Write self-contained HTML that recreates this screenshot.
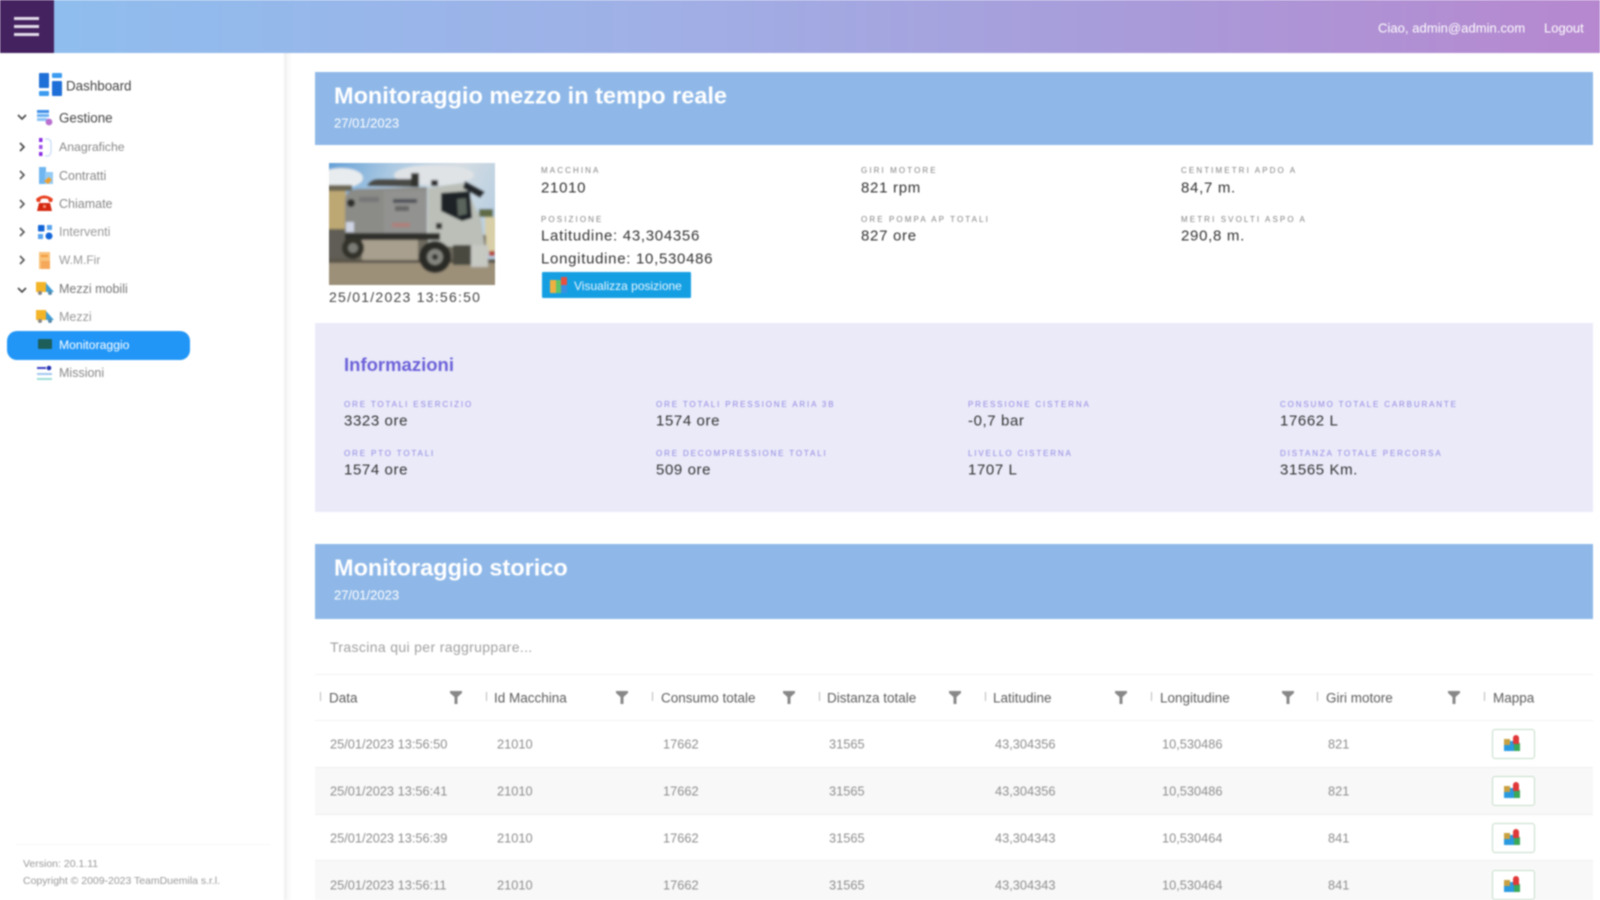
<!DOCTYPE html>
<html lang="it"><head><meta charset="utf-8"><title>Monitoraggio</title>
<style>
html,body{margin:0;padding:0;width:1600px;height:900px;overflow:hidden;background:#fff}
#r{position:absolute;left:0;top:0;width:1600px;height:900px;overflow:hidden;background:#fff;font-family:"Liberation Sans",sans-serif;filter:blur(.8px)}
#r *{box-sizing:border-box}
.t{position:absolute;white-space:nowrap;line-height:1;transform:translateY(-50%)}
.b{position:absolute}
svg{position:absolute;overflow:visible}
.nav{font-size:12.5px;color:#777}
.lab{font-size:8px;letter-spacing:2.1px;color:#808080}
.val{font-size:15px;color:#333;letter-spacing:.7px}
.ilab{font-size:8px;letter-spacing:1.85px;color:#8f87e0}
.ival{font-size:15px;color:#333;letter-spacing:.6px}
.th{font-size:13.5px;color:#5c5c5c}
.td{font-size:12.8px;color:#8e8e8e}
.ttl{font-size:23.5px;font-weight:bold;color:#fff}
.dt{font-size:13px;color:#fff}
</style></head><body>
<div id="r">
<!-- top bar -->
<div class="b" style="left:0;top:0;width:1600px;height:53px;background:linear-gradient(90deg,#8dbeee 0%,#9fb0e6 40%,#a99ad9 72%,#b687cf 100%)"></div>
<div class="b" style="left:0;top:0;width:54px;height:53px;background:#44215f"></div>
<div class="b" style="left:14px;top:17px;width:25px;height:3px;background:#e4dce9"></div>
<div class="b" style="left:14px;top:25px;width:25px;height:3px;background:#e4dce9"></div>
<div class="b" style="left:14px;top:33px;width:25px;height:3px;background:#e4dce9"></div>
<span class="t" style="left:1378px;top:28px;font-size:13px;color:#fff;letter-spacing:.05px">Ciao, admin@admin.com</span>
<span class="t" style="left:1544px;top:28px;font-size:13px;color:#fff">Logout</span>

<!-- sidebar -->
<div class="b" style="left:284px;top:53px;width:8px;height:847px;background:linear-gradient(90deg,#efefef,#fafafa 60%,#fff)"></div>
<svg style="left:38px;top:72px" width="26" height="26" viewBox="0 0 26 26"><rect x="1" y="1" width="10" height="15" rx="1" fill="#1e6fd8"/><rect x="1" y="19" width="10" height="5" rx="1" fill="#3b9bf0"/><rect x="14" y="1" width="10" height="5" rx="1" fill="#3b9bf0"/><rect x="14" y="9" width="10" height="15" rx="1" fill="#1e6fd8"/></svg>
<span class="t nav" style="left:66px;top:86px;color:#444;font-size:13.4px">Dashboard</span>
<svg style="left:17px;top:114px" width="10" height="6"><path d="M1 1l4 4 4-4" fill="none" stroke="#444" stroke-width="1.6"/></svg>
<svg style="left:37px;top:109px" width="16" height="17"><rect x="0" y="1" width="12" height="3" fill="#3f8fe8"/><rect x="0" y="5" width="12" height="3" fill="#6fb2f2"/><rect x="0" y="9" width="10" height="3" fill="#8cc3f5"/><circle cx="12" cy="13" r="3.4" fill="#b86fd0"/></svg>
<span class="t nav" style="left:59px;top:118px;color:#444;font-size:13.4px">Gestione</span>
<svg style="left:19px;top:142px" width="6" height="10"><path d="M1 1l4 4-4 4" fill="none" stroke="#444" stroke-width="1.6"/></svg>
<svg style="left:38px;top:138px" width="16" height="19"><rect x="1" y="0" width="3.5" height="4" fill="#8a2be2"/><rect x="1" y="7" width="3.5" height="4" fill="#a050e8"/><rect x="1" y="14" width="3.5" height="4" fill="#8a2be2"/><path d="M7 1h3q3 1 3 4v8q0 4-3 5H7" fill="none" stroke="#cfe0f8" stroke-width="1.5"/></svg>
<span class="t nav" style="left:59px;top:147px;color:#888;font-size:12.3px">Anagrafiche</span>
<svg style="left:19px;top:170px" width="6" height="10"><path d="M1 1l4 4-4 4" fill="none" stroke="#555" stroke-width="1.6"/></svg>
<svg style="left:38px;top:167px" width="16" height="18"><rect x="1" y="0" width="7" height="17" fill="#6fb6f0"/><rect x="7" y="5" width="8" height="12" fill="#93cbf5"/><path d="M6 14l5-4 3 3-4 4z" fill="#f0a030"/></svg>
<span class="t nav" style="left:59px;top:176px;color:#888">Contratti</span>
<svg style="left:19px;top:199px" width="6" height="10"><path d="M1 1l4 4-4 4" fill="none" stroke="#555" stroke-width="1.6"/></svg>
<svg style="left:35px;top:194px" width="19" height="18"><path d="M1 5q8-7 17 0l-1 3h-3l-1-3q-4-1-7 0l-1 3H2z" fill="#e84020"/><path d="M4 9h11l2 8H2z" fill="#d42810"/><circle cx="9.5" cy="12.5" r="1.6" fill="#f58a70"/></svg>
<span class="t nav" style="left:59px;top:204px;color:#888">Chiamate</span>
<svg style="left:19px;top:227px" width="6" height="10"><path d="M1 1l4 4-4 4" fill="none" stroke="#555" stroke-width="1.6"/></svg>
<svg style="left:37px;top:224px" width="16" height="16"><rect x="1" y="1" width="6.5" height="6.5" rx="1" fill="#1466d8"/><rect x="10" y="1" width="5" height="5" fill="#5aa5ee"/><rect x="1" y="10" width="5" height="5" fill="#5aa5ee"/><circle cx="12" cy="12" r="3.5" fill="#1466d8"/></svg>
<span class="t nav" style="left:59px;top:232px;color:#999">Interventi</span>
<svg style="left:19px;top:255px" width="6" height="10"><path d="M1 1l4 4-4 4" fill="none" stroke="#555" stroke-width="1.6"/></svg>
<svg style="left:38px;top:252px" width="14" height="17"><rect x="1" y="0" width="11" height="17" fill="#f9c27a"/><rect x="3" y="3" width="7" height="2" fill="#f39a3c"/><rect x="3" y="9" width="9" height="8" fill="#f6a85a"/></svg>
<span class="t nav" style="left:59px;top:260px;color:#999;font-size:12px">W.M.Fir</span>
<svg style="left:17px;top:287px" width="10" height="6"><path d="M1 1l4 4 4-4" fill="none" stroke="#444" stroke-width="1.6"/></svg>
<svg style="left:36px;top:281px" width="19" height="15"><rect x="0" y="1" width="10" height="10" fill="#f4b428"/><path d="M10 11V2l8 9z" fill="#3f9fd6"/><circle cx="4" cy="12" r="2" fill="#888"/><circle cx="14" cy="12" r="2" fill="#5588aa"/></svg>
<span class="t nav" style="left:59px;top:289px;color:#777">Mezzi mobili</span>
<svg style="left:36px;top:309px" width="19" height="15"><rect x="0" y="1" width="10" height="10" fill="#f4b428"/><path d="M10 11V2l8 9z" fill="#3f9fd6"/><circle cx="4" cy="12" r="2" fill="#888"/><circle cx="14" cy="12" r="2" fill="#5588aa"/></svg>
<span class="t nav" style="left:59px;top:317px;color:#999">Mezzi</span>
<div class="b" style="left:7px;top:331px;width:183px;height:29px;border-radius:10px;background:#2196f7"></div>
<div class="b" style="left:38px;top:339px;width:14px;height:10px;border-radius:1px;background:#1d5e5a"></div>
<span class="t nav" style="left:59px;top:345px;color:#fff;font-size:12.2px">Monitoraggio</span>
<svg style="left:37px;top:366px" width="16" height="15"><rect x="0" y="1" width="9" height="2" fill="#3a3fc0"/><circle cx="12" cy="2" r="2.3" fill="#2030b0"/><rect x="0" y="7" width="15" height="2" fill="#9fc6f0"/><rect x="0" y="12" width="15" height="2" fill="#9bdcd8"/></svg>
<span class="t nav" style="left:59px;top:373px;color:#888">Missioni</span>
<div class="b" style="left:16px;top:844px;width:254px;height:1px;background:#f6f6f6"></div>
<span class="t" style="left:23px;top:864px;font-size:10.5px;color:#999">Version: 20.1.11</span>
<span class="t" style="left:23px;top:881px;font-size:10.5px;color:#999;letter-spacing:-.02px">Copyright © 2009-2023 TeamDuemila s.r.l.</span>

<!-- panel 1 -->
<div class="b" style="left:315px;top:72px;width:1278px;height:73px;background:#8fb8e8"></div>
<span class="t ttl" style="left:334px;top:96px">Monitoraggio mezzo in tempo reale</span>
<span class="t dt" style="left:334px;top:123px">27/01/2023</span>

<!-- truck image -->
<svg style="left:329px;top:163px" width="166" height="122" viewBox="0 0 166 122">
<defs><linearGradient id="sky" x1="0" y1="0" x2="1" y2=".35"><stop offset="0" stop-color="#5f9dd6"/><stop offset=".35" stop-color="#a9c8e2"/><stop offset=".7" stop-color="#d5dde2"/><stop offset="1" stop-color="#b9cfe2"/></linearGradient>
<filter id="bl" x="-5%" y="-5%" width="110%" height="110%"><feGaussianBlur stdDeviation="1"/></filter>
<clipPath id="cp"><rect width="166" height="122"/></clipPath></defs>
<g clip-path="url(#cp)"><g filter="url(#bl)">
<rect x="-3" y="-3" width="172" height="128" fill="url(#sky)"/>
<ellipse cx="12" cy="15" rx="22" ry="10" fill="#e8ecee"/>
<ellipse cx="105" cy="12" rx="40" ry="10" fill="#dfe3e6"/>
<rect x="-3" y="25" width="20" height="42" fill="#bda873"/>
<rect x="-3" y="22" width="26" height="6" fill="#6a6552"/>
<rect x="156" y="54" width="12" height="34" fill="#d8cfa8"/>
<rect x="150" y="46" width="14" height="8" fill="#5f6a44"/>
<rect x="-3" y="66" width="30" height="32" fill="#5e5d54"/>
<rect x="27" y="72" width="130" height="26" fill="#6e6a5e"/>
<rect x="-3" y="97" width="172" height="28" fill="#9c9079"/>
<rect x="-3" y="96" width="172" height="4" fill="#5a554a"/>
<path d="M38 23q3-7 12-7h36l4 8z" fill="#4a4a44"/>
<rect x="82" y="10" width="8" height="14" fill="#33332f"/>
<rect x="102" y="17" width="7" height="6" fill="#2b2b2a"/>
<path d="M16 36q2-9 12-10l70-2v49H16z" fill="#8b8b87"/>
<rect x="55" y="28" width="42" height="42" fill="#929290"/>
<rect x="64" y="36" width="24" height="4" fill="#50525a"/>
<rect x="66" y="43" width="14" height="5" fill="#666"/>
<rect x="30" y="34" width="20" height="5" fill="#777"/>
<circle cx="22" cy="40" r="4" fill="#2f2f2c"/>
<rect x="17" y="59" width="8" height="10" fill="#cfd5e4"/>
<rect x="63" y="60" width="18" height="4" fill="#b0807a"/>
<path d="M99 25l35-5 18 36 4 30-57-4z" fill="#bbbfb8"/>
<path d="M112 30l29-2 2 27-10 3-21-10z" fill="#1d2226"/>
<path d="M128 36l9-1 1 16-9 2z" fill="#5a645c"/>
<path d="M136 18l20 11-5 6-17-10z" fill="#232629"/>
<rect x="107" y="60" width="6" height="6" fill="#333"/>
<rect x="16" y="70" width="95" height="7" fill="#2f2e2a"/>
<rect x="33" y="77" width="56" height="20" fill="#a89f8e"/>
<rect x="142" y="82" width="17" height="22" fill="#c6c8c2"/>
<rect x="124" y="82" width="18" height="20" fill="#48483f"/>
<rect x="160" y="88" width="6" height="5" fill="#b5432f"/>
<circle cx="24" cy="85" r="11" fill="#30302c"/><circle cx="24" cy="85" r="5" fill="#7c7c76"/>
<circle cx="106" cy="94" r="16" fill="#2b2b28"/><circle cx="106" cy="94" r="8" fill="#85857f"/><circle cx="106" cy="94" r="3" fill="#333"/>
</g></g>
</svg>
<span class="t" style="left:329px;top:297px;font-size:14px;color:#444;letter-spacing:1.25px">25/01/2023 13:56:50</span>

<span class="t lab" style="left:541px;top:171px">MACCHINA</span>
<span class="t val" style="left:541px;top:188px">21010</span>
<span class="t lab" style="left:541px;top:220px">POSIZIONE</span>
<span class="t val" style="left:541px;top:236px">Latitudine: 43,304356</span>
<span class="t val" style="left:541px;top:259px">Longitudine: 10,530486</span>
<div class="b" style="left:542px;top:272px;width:149px;height:26px;background:#159fe3;border-radius:1px"></div>
<svg style="left:550px;top:277px" width="17" height="17"><rect x="0" y="3" width="6" height="13" fill="#f0b040"/><rect x="6" y="3" width="5" height="13" fill="#5fc46a"/><rect x="11" y="0" width="6" height="8" fill="#e85040"/><rect x="11" y="8" width="6" height="8" fill="#3a90e0"/></svg>
<span class="t" style="left:574px;top:286px;font-size:12px;color:#e8f6ff">Visualizza posizione</span>

<span class="t lab" style="left:861px;top:171px">GIRI MOTORE</span>
<span class="t val" style="left:861px;top:188px">821 rpm</span>
<span class="t lab" style="left:861px;top:220px">ORE POMPA AP TOTALI</span>
<span class="t val" style="left:861px;top:236px">827 ore</span>
<span class="t lab" style="left:1181px;top:171px">CENTIMETRI APDO A</span>
<span class="t val" style="left:1181px;top:188px">84,7 m.</span>
<span class="t lab" style="left:1181px;top:220px">METRI SVOLTI ASPO A</span>
<span class="t val" style="left:1181px;top:236px">290,8 m.</span>

<!-- info -->
<div class="b" style="left:315px;top:323px;width:1278px;height:189px;background:#eaeaf9"></div>
<span class="t" style="left:344px;top:365px;font-size:18.5px;font-weight:bold;color:#6d62d8">Informazioni</span>
<span class="t ilab" style="left:344px;top:405px">ORE TOTALI ESERCIZIO</span>
<span class="t ival" style="left:344px;top:421px">3323 ore</span>
<span class="t ilab" style="left:344px;top:454px">ORE PTO TOTALI</span>
<span class="t ival" style="left:344px;top:470px">1574 ore</span>
<span class="t ilab" style="left:656px;top:405px">ORE TOTALI PRESSIONE ARIA 3B</span>
<span class="t ival" style="left:656px;top:421px">1574 ore</span>
<span class="t ilab" style="left:656px;top:454px">ORE DECOMPRESSIONE TOTALI</span>
<span class="t ival" style="left:656px;top:470px">509 ore</span>
<span class="t ilab" style="left:968px;top:405px">PRESSIONE CISTERNA</span>
<span class="t ival" style="left:968px;top:421px">-0,7 bar</span>
<span class="t ilab" style="left:968px;top:454px">LIVELLO CISTERNA</span>
<span class="t ival" style="left:968px;top:470px">1707 L</span>
<span class="t ilab" style="left:1280px;top:405px">CONSUMO TOTALE CARBURANTE</span>
<span class="t ival" style="left:1280px;top:421px">17662 L</span>
<span class="t ilab" style="left:1280px;top:454px">DISTANZA TOTALE PERCORSA</span>
<span class="t ival" style="left:1280px;top:470px">31565 Km.</span>

<!-- panel 2 -->
<div class="b" style="left:315px;top:544px;width:1278px;height:75px;background:#8fb8e8"></div>
<span class="t ttl" style="left:334px;top:568px">Monitoraggio storico</span>
<span class="t dt" style="left:334px;top:595px">27/01/2023</span>
<span class="t" style="left:330px;top:647px;font-size:14px;color:#a0a0a0;letter-spacing:.35px">Trascina qui per raggruppare...</span>
<div class="b" style="left:315px;top:674px;width:1278px;height:1px;background:#f2f2f2"></div>
<div class="b" style="left:315px;top:720px;width:1278px;height:1px;background:#f2f2f2"></div>
<div class="b" style="left:315px;top:767px;width:1278px;height:48px;background:#f8f8f8;border-top:1px solid #eee;border-bottom:1px solid #eee"></div>
<div class="b" style="left:315px;top:860px;width:1278px;height:40px;background:#f8f8f8;border-top:1px solid #eee"></div>

<span class="t th" style="left:329px;top:698px">Data</span>
<span class="t th" style="left:494px;top:698px">Id Macchina</span>
<span class="t th" style="left:661px;top:698px">Consumo totale</span>
<span class="t th" style="left:827px;top:698px">Distanza totale</span>
<span class="t th" style="left:993px;top:698px">Latitudine</span>
<span class="t th" style="left:1160px;top:698px">Longitudine</span>
<span class="t th" style="left:1326px;top:698px">Giri motore</span>
<span class="t th" style="left:1493px;top:698px">Mappa</span>
<div class="b" style="left:320px;top:692px;width:1px;height:9px;background:#bbb"></div>
<div class="b" style="left:486px;top:692px;width:1px;height:9px;background:#bbb"></div>
<div class="b" style="left:652px;top:692px;width:1px;height:9px;background:#bbb"></div>
<div class="b" style="left:819px;top:692px;width:1px;height:9px;background:#bbb"></div>
<div class="b" style="left:985px;top:692px;width:1px;height:9px;background:#bbb"></div>
<div class="b" style="left:1151px;top:692px;width:1px;height:9px;background:#bbb"></div>
<div class="b" style="left:1317px;top:692px;width:1px;height:9px;background:#bbb"></div>
<div class="b" style="left:1484px;top:692px;width:1px;height:9px;background:#bbb"></div>
<svg style="left:450px;top:691px" width="12" height="13"><path d="M0 0h12v2L7.5 6v7h-3V6L0 2z" fill="#888"/></svg>
<svg style="left:616px;top:691px" width="12" height="13"><path d="M0 0h12v2L7.5 6v7h-3V6L0 2z" fill="#888"/></svg>
<svg style="left:783px;top:691px" width="12" height="13"><path d="M0 0h12v2L7.5 6v7h-3V6L0 2z" fill="#888"/></svg>
<svg style="left:949px;top:691px" width="12" height="13"><path d="M0 0h12v2L7.5 6v7h-3V6L0 2z" fill="#888"/></svg>
<svg style="left:1115px;top:691px" width="12" height="13"><path d="M0 0h12v2L7.5 6v7h-3V6L0 2z" fill="#888"/></svg>
<svg style="left:1282px;top:691px" width="12" height="13"><path d="M0 0h12v2L7.5 6v7h-3V6L0 2z" fill="#888"/></svg>
<svg style="left:1448px;top:691px" width="12" height="13"><path d="M0 0h12v2L7.5 6v7h-3V6L0 2z" fill="#888"/></svg>

<!-- rows -->
<span class="t td" style="left:330px;top:745px">25/01/2023 13:56:50</span><span class="t td" style="left:497px;top:745px">21010</span><span class="t td" style="left:663px;top:745px">17662</span><span class="t td" style="left:829px;top:745px">31565</span><span class="t td" style="left:995px;top:745px">43,304356</span><span class="t td" style="left:1162px;top:745px">10,530486</span><span class="t td" style="left:1328px;top:745px">821</span>
<span class="t td" style="left:330px;top:792px">25/01/2023 13:56:41</span><span class="t td" style="left:497px;top:792px">21010</span><span class="t td" style="left:663px;top:792px">17662</span><span class="t td" style="left:829px;top:792px">31565</span><span class="t td" style="left:995px;top:792px">43,304356</span><span class="t td" style="left:1162px;top:792px">10,530486</span><span class="t td" style="left:1328px;top:792px">821</span>
<span class="t td" style="left:330px;top:839px">25/01/2023 13:56:39</span><span class="t td" style="left:497px;top:839px">21010</span><span class="t td" style="left:663px;top:839px">17662</span><span class="t td" style="left:829px;top:839px">31565</span><span class="t td" style="left:995px;top:839px">43,304343</span><span class="t td" style="left:1162px;top:839px">10,530464</span><span class="t td" style="left:1328px;top:839px">841</span>
<span class="t td" style="left:330px;top:886px">25/01/2023 13:56:11</span><span class="t td" style="left:497px;top:886px">21010</span><span class="t td" style="left:663px;top:886px">17662</span><span class="t td" style="left:829px;top:886px">31565</span><span class="t td" style="left:995px;top:886px">43,304343</span><span class="t td" style="left:1162px;top:886px">10,530464</span><span class="t td" style="left:1328px;top:886px">841</span>

<div class="b" style="left:1492px;top:729px;width:43px;height:30px;border:1px solid #c4dcc8;border-radius:3px;background:#fff"></div>
<div class="b" style="left:1492px;top:776px;width:43px;height:30px;border:1px solid #c4dcc8;border-radius:3px;background:#fff"></div>
<div class="b" style="left:1492px;top:823px;width:43px;height:30px;border:1px solid #c4dcc8;border-radius:3px;background:#fff"></div>
<div class="b" style="left:1492px;top:870px;width:43px;height:30px;border:1px solid #c4dcc8;border-radius:3px;background:#fff"></div>
<svg style="left:1503px;top:735px" width="18" height="17"><rect x="1" y="4" width="6" height="7" fill="#c9a040"/><rect x="1" y="10" width="7" height="6" fill="#2a9ae0"/><rect x="7" y="6" width="5" height="10" fill="#2a9ae0"/><rect x="11" y="8" width="6" height="8" fill="#3aa858"/><path d="M10 9V3a3 3 0 0 1 6 0v6z" fill="#e03838"/></svg>
<svg style="left:1503px;top:782px" width="18" height="17"><rect x="1" y="4" width="6" height="7" fill="#c9a040"/><rect x="1" y="10" width="7" height="6" fill="#2a9ae0"/><rect x="7" y="6" width="5" height="10" fill="#2a9ae0"/><rect x="11" y="8" width="6" height="8" fill="#3aa858"/><path d="M10 9V3a3 3 0 0 1 6 0v6z" fill="#e03838"/></svg>
<svg style="left:1503px;top:829px" width="18" height="17"><rect x="1" y="4" width="6" height="7" fill="#c9a040"/><rect x="1" y="10" width="7" height="6" fill="#2a9ae0"/><rect x="7" y="6" width="5" height="10" fill="#2a9ae0"/><rect x="11" y="8" width="6" height="8" fill="#3aa858"/><path d="M10 9V3a3 3 0 0 1 6 0v6z" fill="#e03838"/></svg>
<svg style="left:1503px;top:876px" width="18" height="17"><rect x="1" y="4" width="6" height="7" fill="#c9a040"/><rect x="1" y="10" width="7" height="6" fill="#2a9ae0"/><rect x="7" y="6" width="5" height="10" fill="#2a9ae0"/><rect x="11" y="8" width="6" height="8" fill="#3aa858"/><path d="M10 9V3a3 3 0 0 1 6 0v6z" fill="#e03838"/></svg>
</div>
</body></html>
